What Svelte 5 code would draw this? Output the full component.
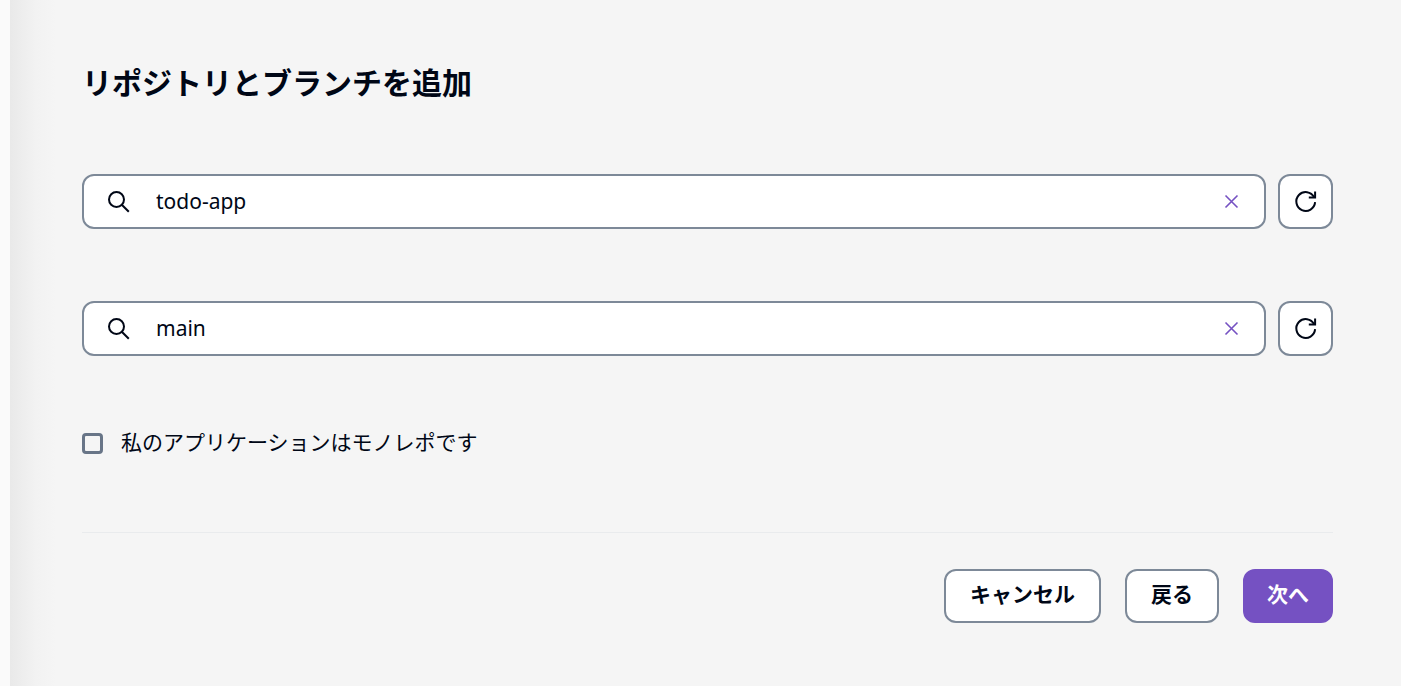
<script>
    let fields = $state([
        { id: "repository", label: "リポジトリ", value: "todo-app" },
        { id: "branch", label: "ブランチ", value: "main" },
    ]);
    let monorepo = $state(false);

    function clearField(field)
    {
        field.value = "";
    }
</script>


<div class="page">
    <div class="edge"></div>

    <main>
        <form onsubmit={(e) => e.preventDefault()}>
            <h1>リポジトリとブランチを追加</h1>

            <div class="fields">
                {#each fields as field (field.id)}
                    <div class="row">
                        <div class="search">
                            <svg class="magnifier" viewBox="0 0 24 24" aria-hidden="true">
                                <circle cx="10.5" cy="9.5" r="7.5" />
                                <path d="M15.8 14.8L22.8 21.8" />
                            </svg>
                            <input type="text" id={field.id} aria-label={field.label} bind:value={field.value} />
                            <button type="button" class="clear" aria-label="クリア" onclick={() => clearField(field)}>
                                <svg viewBox="0 0 15 15"><path d="M1.5 1.5L13.5 13.5M13.5 1.5L1.5 13.5" /></svg>
                            </button>
                        </div>
                        <button type="button" class="refresh" aria-label="更新">
                            <svg viewBox="0 0 24 24">
                                <path d="M21.1 12.2A9.4 9.4 0 1 1 20.1 7.2" />
                                <path d="M21.1 1.4V7.6H14.8" />
                            </svg>
                        </button>
                    </div>
                {/each}
            </div>

            <div class="check">
                <input type="checkbox" id="monorepo" bind:checked={monorepo} />
                <label for="monorepo">私のアプリケーションはモノレポです</label>
            </div>

            <div class="actions">
                <button type="button">キャンセル</button>
                <button type="button">戻る</button>
                <button type="submit" class="primary">次へ</button>
            </div>
        </form>
    </main>
</div>


<style>
    :global(body) {
        background: #f5f5f5;
    }

    .page {
        display: flex;
        min-height: 100vh;
        color: #000716;
        font-family: "Noto Sans", "Noto Sans CJK JP", sans-serif;
        font-size: 21px;
        line-height: 30px;
    }

    .edge {
        width: 10px;
        background: #fafafa;
    }

    main {
        flex: 1;
        padding: 64px 68px 60px 72px;
        background: linear-gradient(to right, #e9e9e9 0, #eeeeee 14px, #f2f2f2 26px, #f5f5f5 46px);
    }

    h1 {
        margin: 0 0 72px;
        font-size: 30px;
        line-height: 38px;
        font-weight: 700;
    }

    .fields {
        display: grid;
        gap: 72px;
    }

    .row {
        display: flex;
        gap: 12px;
    }

    button {
        box-sizing: border-box;
        border: 2px solid #7d8998;
        border-radius: 12px;
        background: #fff;
        color: #000716;
        font: inherit;
        cursor: pointer;
    }

    svg {
        display: block;
        fill: none;
        stroke: currentColor;
        stroke-width: 2;
    }

    .search {
        box-sizing: border-box;
        display: flex;
        flex: 1;
        align-items: center;
        height: 55px;
        padding: 0 25px 0 22px;
        border: 2px solid #7d8998;
        border-radius: 12px;
        background: #fff;
    }

    .magnifier {
        width: 24px;
        height: 24px;
    }

    .search input {
        flex: 1;
        min-width: 0;
        margin: 0 0 0 26px;
        padding: 0 0 2px;
        border: 0;
        outline: 0;
        background: none;
        color: inherit;
        font: inherit;
    }

    .clear {
        padding: 0;
        border: 0;
        color: #7551c2;
    }

    .clear svg {
        width: 15px;
        height: 15px;
        stroke-width: 1.6;
    }

    .refresh {
        display: grid;
        place-items: center;
        width: 55px;
        height: 55px;
        padding: 0;
    }

    .refresh svg {
        width: 24px;
        height: 24px;
    }

    .check {
        display: flex;
        align-items: center;
        gap: 18px;
        margin-top: 71px;
    }

    .check input {
        appearance: none;
        width: 21px;
        height: 21px;
        margin: 0;
        border: 3px solid #687587;
        border-radius: 4px;
        background: #f5f5f5;
    }

    .check input:checked {
        border-color: #7551c2;
        background: #7551c2;
    }

    .check label {
        padding-bottom: 2px;
    }

    .actions {
        display: flex;
        justify-content: flex-end;
        gap: 24px;
        margin-top: 73px;
        padding-top: 36px;
        border-top: 1px solid #e9ebed;
    }

    .actions button {
        height: 54px;
        padding: 0 24px 4px;
        font-weight: 700;
    }

    .actions .primary {
        padding: 0 22px 4px;
        border-color: #7551c2;
        background: #7551c2;
        color: #fff;
    }
</style>
